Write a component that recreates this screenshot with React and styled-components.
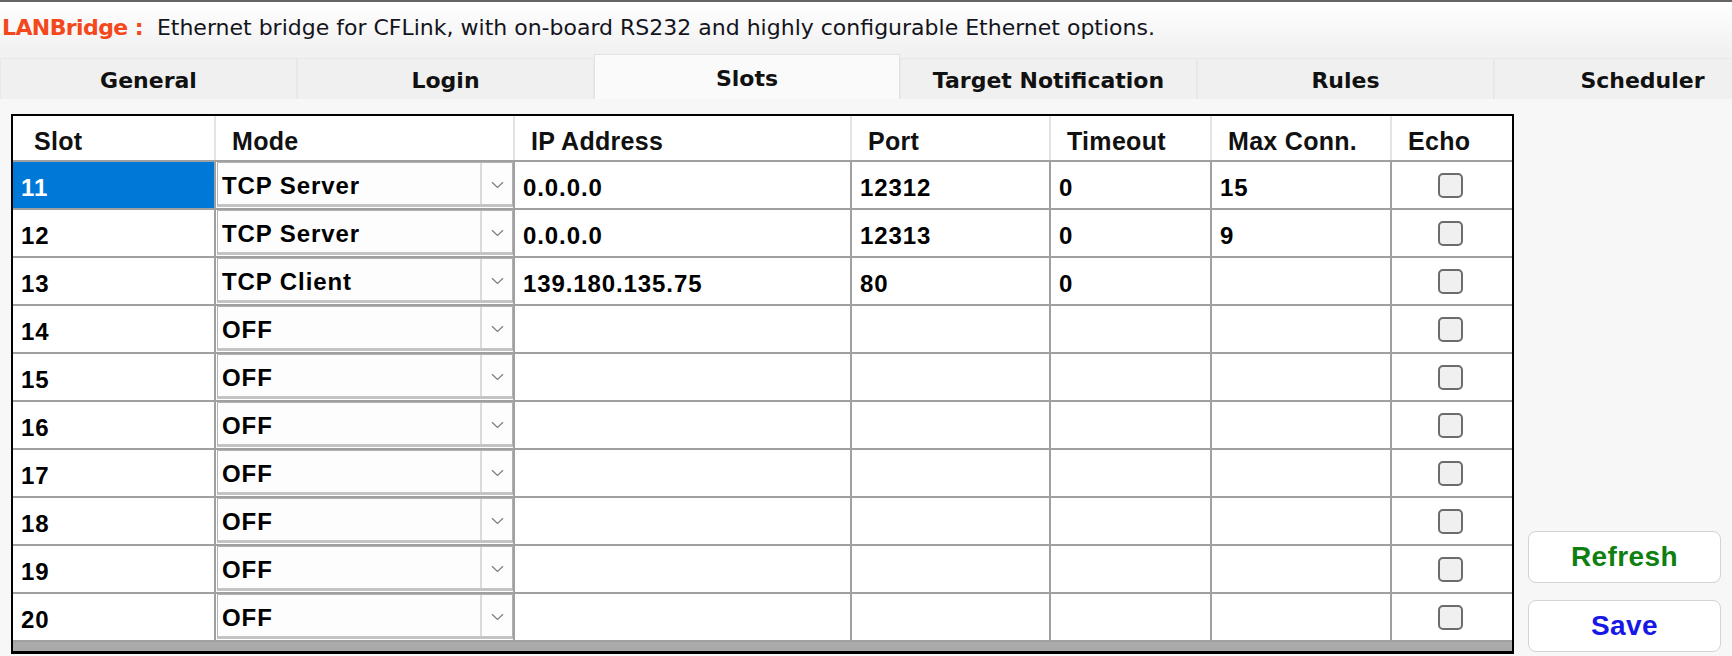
import React from "react";
import styled, { createGlobalStyle } from "styled-components";

const GlobalStyle = createGlobalStyle`
  html, body {
    margin: 0;
    padding: 0;
  }
  body {
    width: 1732px;
    height: 656px;
    overflow: hidden;
    background: #f6f6f6;
    font-family: "Liberation Sans", Arial, sans-serif;
  }
`;

const COLS = "201px 299px 337px 199px 161px 180px 122px";

const tabs = [
  { name: "General", width: 297 },
  { name: "Login", width: 297 },
  { name: "Slots", width: 306, active: true },
  { name: "Target Notification", width: 297 },
  { name: "Rules", width: 297 },
  { name: "Scheduler", width: 297 },
];

const slots = [
  { slot: "11", mode: "TCP Server", ip: "0.0.0.0", port: "12312", timeout: "0", max: "15" },
  { slot: "12", mode: "TCP Server", ip: "0.0.0.0", port: "12313", timeout: "0", max: "9" },
  { slot: "13", mode: "TCP Client", ip: "139.180.135.75", port: "80", timeout: "0", max: "" },
  { slot: "14", mode: "OFF" },
  { slot: "15", mode: "OFF" },
  { slot: "16", mode: "OFF" },
  { slot: "17", mode: "OFF" },
  { slot: "18", mode: "OFF" },
  { slot: "19", mode: "OFF" },
  { slot: "20", mode: "OFF" },
];

const Chevron = () => (
  <svg width="13" height="8" viewBox="0 0 13 8">
    <path d="M1 1.2 L6.5 6.5 L12 1.2" fill="none" stroke="#7a7a7a" strokeWidth="1.2" />
  </svg>
);

const App = () => {
  return (
    <Page>
      <GlobalStyle />
      <Header>
        <Brand>LANBridge :</Brand>
        <span>Ethernet bridge for CFLink, with on-board RS232 and highly configurable Ethernet options.</span>
      </Header>

      <TabBar>
        {tabs.map((t) => (
          <Tab key={t.name} $width={t.width} $active={t.active}>
            {t.name}
          </Tab>
        ))}
      </TabBar>

      <Content>
        <Grid>
          <HeadRow>
            <HeadCell>Slot</HeadCell>
            <HeadCell>Mode</HeadCell>
            <HeadCell>IP Address</HeadCell>
            <HeadCell>Port</HeadCell>
            <HeadCell>Timeout</HeadCell>
            <HeadCell>Max Conn.</HeadCell>
            <HeadCell>Echo</HeadCell>
          </HeadRow>

          {slots.map((s, i) => (
            <Row key={s.slot}>
              <Cell $selected={i === 0}>{s.slot}</Cell>
              <ModeCell>
                <Select>
                  <SelectText>{s.mode}</SelectText>
                  <SelectArrow>
                    <Chevron />
                  </SelectArrow>
                </Select>
              </ModeCell>
              <Cell>{s.ip}</Cell>
              <Cell>{s.port}</Cell>
              <Cell>{s.timeout}</Cell>
              <Cell>{s.max}</Cell>
              <EchoCell>
                <CheckBox />
              </EchoCell>
            </Row>
          ))}
          <ScrollBand />
        </Grid>

        <SidePanel>
          <ActionButton $color="#0f7f12">Refresh</ActionButton>
          <ActionButton $color="#1717e6">Save</ActionButton>
        </SidePanel>
      </Content>
    </Page>
  );
};

export default App;

const Page = styled.div`
  height: 656px;
  display: flex;
  flex-direction: column;
  border-top: 2px solid #656565;
  box-sizing: border-box;
`;

const Header = styled.div`
  height: 50px;
  flex-shrink: 0;
  display: flex;
  align-items: center;
  gap: 14px;
  padding-left: 2px;
  background: linear-gradient(#ffffff, #f1f1f1);
  font-family: "DejaVu Sans", Verdana, sans-serif;
  font-size: 22px;
  color: #14141c;
  white-space: nowrap;
`;

const Brand = styled.span`
  font-weight: bold;
  color: #f4481c;
  letter-spacing: -0.6px;
`;

const TabBar = styled.div`
  height: 47px;
  flex-shrink: 0;
  display: flex;
  align-items: flex-end;
  overflow: hidden;
  background: #f1f1f1;
`;

const Tab = styled.div`
  flex: 0 0 ${(p) => p.$width}px;
  height: ${(p) => (p.$active ? 45 : 41)}px;
  box-sizing: border-box;
  display: flex;
  align-items: center;
  justify-content: center;
  padding-top: 2px;
  background: ${(p) => (p.$active ? "#fafafa" : "#f0f0f0")};
  border: 1px solid ${(p) => (p.$active ? "#e2e2e2" : "#e8e8e8")};
  border-bottom: none;
  font-family: "DejaVu Sans", Verdana, sans-serif;
  font-weight: bold;
  font-size: 22px;
  color: #111;
  white-space: nowrap;
`;

const Content = styled.div`
  flex: 1;
  display: flex;
  gap: 14px;
  padding: 15px 11px 2px 11px;
  background: #f7f7f7;
`;

const Grid = styled.div`
  width: 1503px;
  flex-shrink: 0;
  box-sizing: border-box;
  display: flex;
  flex-direction: column;
  border: 2px solid #000;
  border-bottom-width: 3px;
  background: #fff;
`;

const HeadRow = styled.div`
  display: grid;
  grid-template-columns: ${COLS};
  height: 46px;
  box-sizing: border-box;
  border-bottom: 2px solid #a0a0a0;
`;

const HeadCell = styled.div`
  display: flex;
  align-items: center;
  padding: 6px 0 0 16px;
  border-left: 2px solid #e4e4e4;
  font-weight: bold;
  font-size: 25px;
  letter-spacing: 0.3px;
  color: #111;

  &:first-child {
    border-left: none;
    padding-left: 21px;
  }
`;

const Row = styled.div`
  display: grid;
  grid-template-columns: ${COLS};
  height: 48px;
  box-sizing: border-box;
  border-bottom: 2px solid #a0a0a0;
`;

const Cell = styled.div`
  display: flex;
  align-items: center;
  padding: 5px 0 0 8px;
  border-left: 2px solid #a0a0a0;
  font-weight: bold;
  font-size: 24px;
  letter-spacing: 0.9px;
  color: ${(p) => (p.$selected ? "#fff" : "#000")};
  background: ${(p) => (p.$selected ? "#0078d7" : "transparent")};

  &:first-child {
    border-left: none;
  }
`;

const ModeCell = styled.div`
  display: flex;
  padding: 0 0 1px 1px;
  border-left: 2px solid #a0a0a0;
`;

const Select = styled.div`
  flex: 1;
  display: flex;
  box-sizing: border-box;
  border: 1px solid #b2b2b2;
  border-bottom: 3px solid #c4c4c4;
  background: #fdfdfd;
`;

const SelectText = styled.div`
  flex: 1;
  display: flex;
  align-items: center;
  padding: 5px 0 0 4px;
  font-weight: bold;
  font-size: 24px;
  letter-spacing: 0.9px;
  color: #000;
`;

const SelectArrow = styled.div`
  width: 30px;
  display: flex;
  align-items: center;
  justify-content: center;
  padding-top: 2px;
  border-left: 2px solid #dadada;
`;

const EchoCell = styled.div`
  display: flex;
  align-items: center;
  justify-content: center;
  border-left: 2px solid #a0a0a0;
`;

const CheckBox = styled.div`
  width: 25px;
  height: 25px;
  box-sizing: border-box;
  margin-right: 4px;
  border: 2px solid #6c6c6c;
  border-radius: 5px;
  background: #f0f0f0;
`;

const ScrollBand = styled.div`
  flex: 1;
  background: #aaaaaa;
`;

const SidePanel = styled.div`
  width: 193px;
  display: flex;
  flex-direction: column;
  justify-content: flex-end;
  gap: 17px;
  padding-bottom: 2px;
`;

const ActionButton = styled.button`
  height: 52px;
  box-sizing: border-box;
  border: 1px solid #d3d3d3;
  border-radius: 8px;
  background: #fff;
  font-family: "Liberation Sans", Arial, sans-serif;
  font-weight: bold;
  font-size: 28px;
  letter-spacing: 0.4px;
  color: ${(p) => p.$color};
  padding: 0;
`;
